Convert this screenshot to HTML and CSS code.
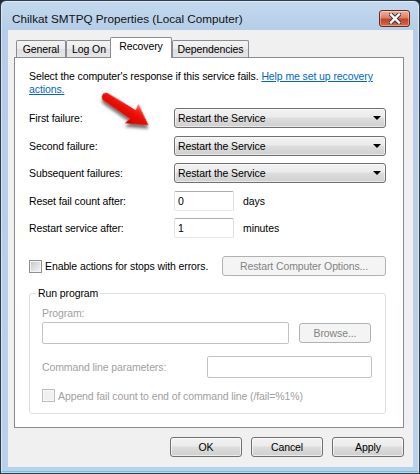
FILE: index.html
```html
<!DOCTYPE html>
<html>
<head>
<meta charset="utf-8">
<link rel="stylesheet" href="styles.css">
</head>
<body>
<div class="window">
  <div class="titlebar">
    <span class="title">Chilkat SMTPQ Properties (Local Computer)</span>
    <div class="close">
      <svg width="12" height="11" viewBox="0 0 12 11">
        <path d="M2,1.5 L10,9.5 M10,1.5 L2,9.5" stroke="#3b3b3b" stroke-width="4.4" stroke-linecap="square" fill="none"/>
        <path d="M2,1.5 L10,9.5 M10,1.5 L2,9.5" stroke="#ffffff" stroke-width="2.4" stroke-linecap="square" fill="none"/>
      </svg>
    </div>
  </div>
  <div class="client">
    <div class="tabs">
      <div class="tab tab-general">General</div>
      <div class="tab tab-logon">Log On</div>
      <div class="tab tab-recovery">Recovery</div>
      <div class="tab tab-deps">Dependencies</div>
    </div>
    <div class="panel">
      <svg class="red-arrow" width="70" height="56" viewBox="0 0 70 56">
        <defs>
          <linearGradient id="ag" x1="0" y1="-12" x2="0" y2="12" gradientUnits="userSpaceOnUse">
            <stop offset="0" stop-color="#ff6a55"/>
            <stop offset="0.35" stop-color="#f41408"/>
            <stop offset="1" stop-color="#c40000"/>
          </linearGradient>
          <filter id="sh" x="-30%" y="-30%" width="160%" height="170%">
            <feDropShadow dx="2" dy="3" stdDeviation="1.6" flood-color="#000" flood-opacity="0.55"/>
          </filter>
        </defs>
        <g transform="translate(8,9) rotate(33)" filter="url(#sh)">
          <path d="M0,-4.2 L32,-5.2 L31,-11.8 L51,0.5 L30,11.8 L32,5.2 L0,4.2 A4.2,4.2 0 0 1 0,-4.2 Z" fill="url(#ag)"/>
        </g>
      </svg>
      <p class="intro">Select the computer's response if this service fails. <a href="#">Help me set up recovery<br>actions.</a></p>
      <div class="row mt12"><span class="lbl">First failure:</span><div class="combo"><span>Restart the Service</span><span class="caret"></span></div></div>
      <div class="row mt8"><span class="lbl">Second failure:</span><div class="combo"><span>Restart the Service</span><span class="caret"></span></div></div>
      <div class="row mt7"><span class="lbl">Subsequent failures:</span><div class="combo"><span>Restart the Service</span><span class="caret"></span></div></div>
      <div class="row mt8"><span class="lbl">Reset fail count after:</span><div class="field">0</div><span class="unit">days</span></div>
      <div class="row mt7"><span class="lbl">Restart service after:</span><div class="field">1</div><span class="unit">minutes</span></div>
      <div class="row mt18">
        <span class="check"></span><span class="check-text">Enable actions for stops with errors.</span>
        <div class="btn disabled btn-options">Restart Computer Options...</div>
      </div>
      <div class="group">
        <span class="group-title">Run program</span>
        <div class="dim prog-label">Program:</div>
        <div class="prog-row">
          <div class="dfield prog-field"></div>
          <div class="btn disabled btn-browse">Browse...</div>
        </div>
        <div class="cmd-row">
          <span class="dim cmd-label">Command line parameters:</span>
          <div class="dfield cmd-field"></div>
        </div>
        <div class="append-row">
          <span class="check check-disabled"></span><span class="dim check-text">Append fail count to end of command line (/fail=%1%)</span>
        </div>
      </div>
    </div>
    <div class="buttons">
      <div class="btn btn-main">OK</div>
      <div class="btn btn-main">Cancel</div>
      <div class="btn btn-main">Apply</div>
    </div>
  </div>
</div>
</body>
</html>
```
FILE: styles.css
```css
* { box-sizing: border-box; }
html, body { margin: 0; padding: 0; }
body {
  width: 420px;
  height: 474px;
  overflow: hidden;
  background: #1d2a35;
  font-family: "Liberation Sans", Arial, sans-serif;
  font-size: 10.5px;
  letter-spacing: -0.1px;
  color: #000;
}
.window {
  width: 420px;
  height: 474px;
  border: 1px solid #2e3d4c;
  border-radius: 6px 6px 0 0;
  background: linear-gradient(#c4d9ef, #b5cde8 30px, #b9d1ea);
  padding: 0 6px 6px 7px;
  display: flex;
  flex-direction: column;
  box-shadow: inset 0 0 0 1px rgba(255, 255, 255, 0.45), inset 0 -2px 0 #62c8dc;
}
.titlebar {
  flex: none;
  height: 29px;
  display: flex;
  justify-content: space-between;
  align-items: flex-start;
  padding-left: 4px;
}
.title {
  font-family: "Liberation Sans", Arial, sans-serif;
  font-size: 11.7px;
  letter-spacing: 0;
  line-height: 16px;
  margin-top: 10px;
  color: #111;
}
.close {
  width: 31px;
  height: 17px;
  margin: 9px 3px 0 0;
  border: 1px solid #6b2a1e;
  border-radius: 3px;
  background: linear-gradient(#eeb0a0, #dc8068 45%, #c5432a 55%, #d2694c);
  display: flex;
  align-items: center;
  justify-content: center;
  box-shadow: inset 0 0 0 1px rgba(255, 255, 255, 0.35);
}
.client {
  flex: 1;
  background: #f0f0f0;
  padding: 7px 9px 0 6px;
  display: flex;
  flex-direction: column;
}
.tabs {
  display: flex;
  align-items: flex-end;
  height: 21px;
  padding-left: 2px;
  margin-bottom: -1px;
  position: relative;
  z-index: 2;
}
.tab {
  height: 17px;
  margin-bottom: 1px;
  border: 1px solid #898c95;
  border-bottom: none;
  border-radius: 2px 2px 0 0;
  background: linear-gradient(#f3f3f3, #ebebeb 50%, #dedede 50%, #e6e6e6);
  display: flex;
  align-items: center;
  justify-content: center;
  line-height: 13px;
  padding-top: 1px;
}
.tab-general { width: 50px; }
.tab-logon { width: 46px; }
.tab-recovery {
  width: 62px;
  height: 21px;
  margin: 0 0 0 -2px;
  background: #fff;
  padding: 0 0 3px 0;
}
.tab-deps { width: 77px; }
.panel {
  position: relative;
  z-index: 1;
  border: 1px solid #898c95;
  background: #fff;
  padding: 12px 17px 13px 14px;
}
.red-arrow {
  position: absolute;
  left: 83px;
  top: 30px;
  overflow: visible;
}
.intro { margin: 0; line-height: 13px; }
.intro a { color: #0066cc; text-decoration: underline; }
.row { display: flex; align-items: center; height: 20px; }
.mt12 { margin-top: 12px; }
.mt8 { margin-top: 8px; }
.mt7 { margin-top: 7px; }
.mt18 { margin-top: 18px; }
.lbl { width: 145px; flex: none; }
.combo {
  flex: 1;
  height: 20px;
  border: 1px solid #707070;
  border-radius: 3px;
  background: linear-gradient(#f2f2f2, #ebebeb 45%, #dddddd 50%, #cfcfcf);
  display: flex;
  align-items: center;
  justify-content: space-between;
  padding: 0 4px 0 3px;
  box-shadow: inset 0 0 0 1px rgba(255, 255, 255, 0.55);
}
.caret {
  width: 0;
  height: 0;
  border-left: 4px solid transparent;
  border-right: 4px solid transparent;
  border-top: 4px solid #000;
}
.field {
  width: 60px;
  height: 20px;
  border: 1px solid;
  border-color: #abadb3 #dbdfe6 #e3e9ef #e2e3ea;
  border-radius: 2px;
  background: #fff;
  padding-left: 3px;
  display: flex;
  align-items: center;
}
.unit { margin-left: 9px; }
.check {
  flex: none;
  width: 13px;
  height: 13px;
  border: 1px solid #8e8f8f;
  background: linear-gradient(135deg, #c2c6cc, #e8e8e8 70%, #f7f7f7);
  box-shadow: inset 0 0 0 1px #f4f4f4;
}
.check-disabled {
  border-color: #bcbcbc;
  background: #f0f0f0;
  box-shadow: inset 0 0 0 1px #f8f8f8;
}
.check-text { margin-left: 3px; }
.btn {
  height: 20px;
  border: 1px solid #707070;
  border-radius: 3px;
  background: linear-gradient(#f2f2f2, #ebebeb 45%, #dddddd 50%, #cfcfcf);
  display: flex;
  align-items: center;
  justify-content: center;
  box-shadow: inset 0 0 0 1px rgba(255, 255, 255, 0.6);
}
.btn.disabled {
  border-color: #adb2b5;
  background: #f4f4f4;
  color: #838383;
  box-shadow: none;
}
.btn-options { width: 164px; margin-left: auto; }
.group {
  position: relative;
  margin-top: 17px;
  border: 1px solid #d5dfe5;
  border-radius: 3px;
  padding: 12px 13px 11px 12px;
}
.group-title {
  position: absolute;
  top: -7px;
  left: 6px;
  padding: 0 2px;
  background: #fff;
  line-height: 13px;
}
.dim { color: #a0a0a0; }
.prog-label { line-height: 14px; }
.prog-row { display: flex; align-items: center; height: 22px; margin-top: 2px; }
.dfield {
  height: 22px;
  border: 1px solid #bfc3c8;
  border-radius: 2px;
  background: #fff;
}
.prog-field { width: 247px; }
.btn-browse { width: 72px; margin-left: 10px; }
.cmd-row { display: flex; align-items: center; height: 22px; margin-top: 12px; }
.cmd-label { width: 165px; flex: none; }
.cmd-field { width: 165px; }
.append-row { display: flex; align-items: center; height: 13px; margin-top: 11px; }
.buttons {
  display: flex;
  justify-content: flex-end;
  gap: 9px;
  margin-top: 9px;
}
.btn-main { width: 72px; }
```
